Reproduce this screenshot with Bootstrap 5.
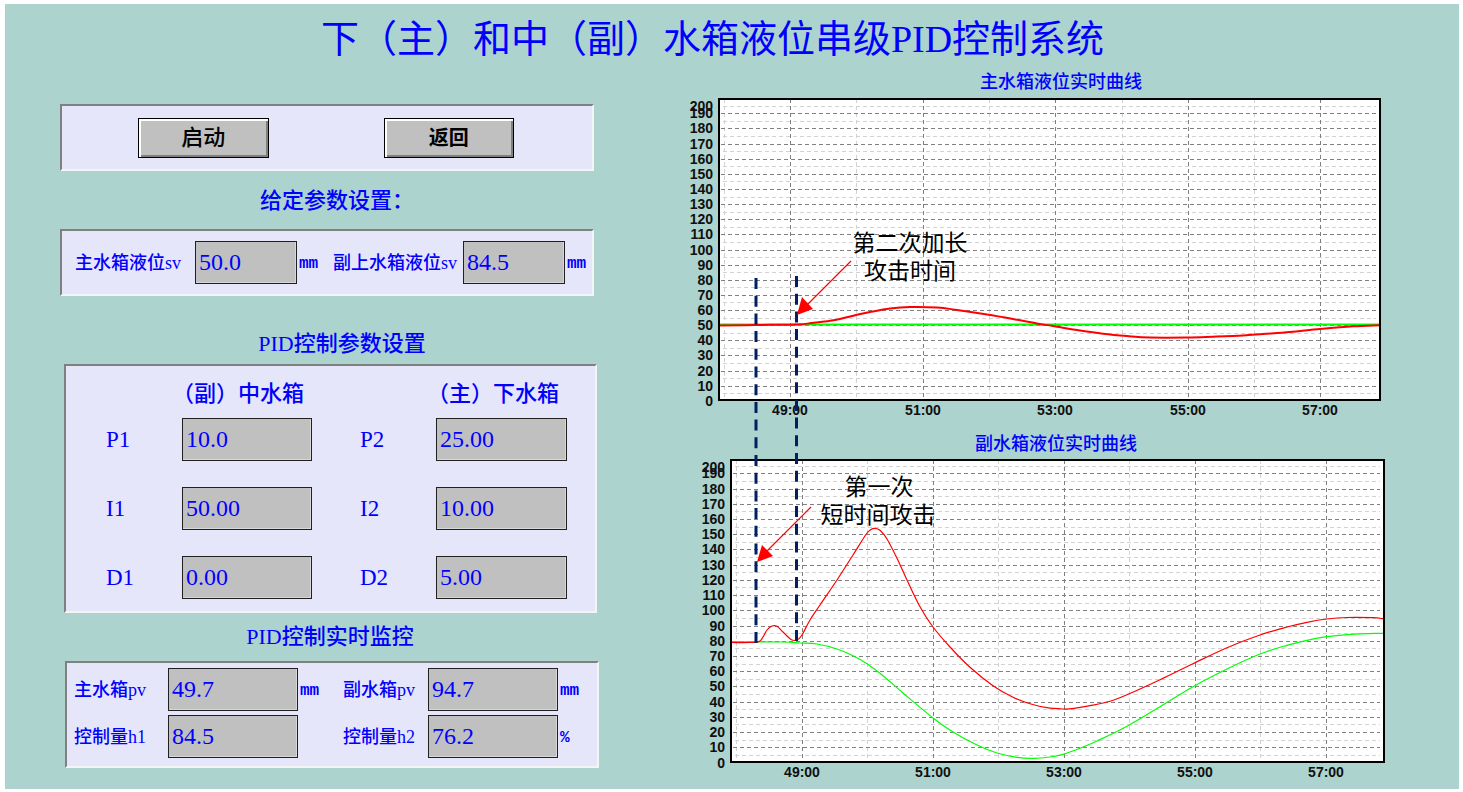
<!DOCTYPE html>
<html lang="zh-CN">
<head>
<meta charset="utf-8">
<meta name="viewport" content="width=device-width, initial-scale=1">
<title>下（主）和中（副）水箱液位串级PID控制系统</title>
<link href="https://cdn.jsdelivr.net/npm/bootstrap@5.3.0/dist/css/bootstrap.min.css" rel="stylesheet">
<style>
  :root { --ink: #0000ff; --board: #acd3ce; --pane: #e6e6fa; --face: #c0c0c0; }
  body { background: #fff; font-family: "Liberation Serif", "Noto Sans CJK SC", serif; color: var(--ink); padding: 4px 4px 3px 5px; }
  .board { background: var(--board); padding-bottom: 4px; }
  .board-title { font-size: 38px; line-height: 58px; padding-top: 6px; padding-right: 39px; font-weight: 400; }
  .work { display: grid; grid-template-columns: minmax(0, 540fr) minmax(0, 713fr); column-gap: 80px; padding-left: 55px; padding-right: 66px; }
  .controls { padding-top: 36px; }
  .pane { background: var(--pane); border: 2px solid; border-color: #808080 #f4f4f4 #f4f4f4 #808080; }
  .pane-upper { margin-right: 6px; height: 67px; }
  .pane-pid { margin: 0 3px 0 4px; padding: 0 0 12px; }
  .pane-live { margin: 0 1px 0 5px; padding: 5px 0 8px 7px; }
  .pane-title { font-size: 22px; line-height: 40px; margin: 0; text-align: center; font-weight: 500; }
  .title-set { padding: 10px 0 8px 14px; }
  .title-pid { padding: 28px 0 0 24px; }
  .title-live { padding: 4px 0; }
  .action-row { grid-template-columns: 130fr 130fr; column-gap: 115px; padding: 0 78px 0 76px; align-items: center; }
  .set-row { grid-template-columns: 120fr 102fr 36fr 130fr 102fr 27fr; padding-left: 13px; align-items: center; }
  .pid-grid { grid-template-columns: 116fr 130fr 124fr 131fr 28fr; row-gap: 26px; align-items: center; }
  .tank-row { grid-template-columns: 246fr 255fr 28fr; padding-top: 4px; }
  .live-grid { grid-template-columns: 94fr 130fr 45fr 85fr 130fr 39fr; row-gap: 4px; align-items: center; }
  .tank-name { font-size: 22px; font-weight: 500; line-height: 48px; text-align: right; padding-right: 8px; white-space: nowrap; }
  .item-name { font-size: 18px; font-weight: 500; line-height: 24px; white-space: nowrap; }
  .gain-name { font-size: 23px; line-height: 24px; padding-left: 40px; }
  .gain-name.second { padding-left: 48px; }
  .unit { font: 700 16px/24px "Liberation Mono", monospace; padding-left: 2px; padding-top: 2px; }
  .readout { width: 100%; height: 43px; border: 1px solid #202020; border-radius: 0; background: var(--face); color: var(--ink); font-family: "Liberation Serif", serif; font-size: 24px; line-height: 28px; padding: 0 3px 1px; box-shadow: inset -1px -1px 0 #d8d8d8; }
  .readout:focus { background: var(--face); color: var(--ink); box-shadow: 0 0 0 1px var(--ink); }
  .btn-relief { height: 40px; border: 1px solid #000; border-radius: 0; background: var(--face); color: #000; font-size: 22px; font-weight: 500; line-height: 28px; padding: 0; box-shadow: inset 2px 2px 0 #fff, inset -2px -2px 0 #808080; }
  .btn-relief:hover { background: #cacaca; color: #000; border-color: #000; }
  .btn-relief.compact { font-size: 20px; font-weight: 700; }
  .trends { display: block; width: 100%; height: auto; }
  .trend-title { font: 500 18px "Noto Sans CJK SC", sans-serif; fill: var(--ink); text-anchor: middle; }
  .tick { font: 700 14px "Liberation Sans", sans-serif; fill: #101010; }
  .note { font: 400 23px "Noto Sans CJK SC", sans-serif; fill: #000; text-anchor: middle; }
  @media (max-width: 991px) { .work { grid-template-columns: minmax(0, 1fr); padding-left: 16px; padding-right: 16px; } }
</style>
</head>
<body>
<main class="board">
  <h1 class="board-title text-center mb-0">下（主）和中（副）水箱液位串级PID控制系统</h1>
  <div class="work">
    <section class="controls">
      <div class="pane pane-upper d-grid action-row">
        <button type="button" class="btn btn-relief">启动</button>
        <button type="button" class="btn btn-relief compact">返回</button>
      </div>

      <h2 class="pane-title title-set">给定参数设置：</h2>
      <div class="pane pane-upper d-grid set-row">
        <label class="item-name" for="sv1">主水箱液位sv</label>
        <input class="form-control readout" id="sv1" value="50.0">
        <span class="unit">mm</span>
        <label class="item-name" for="sv2">副上水箱液位sv</label>
        <input class="form-control readout" id="sv2" value="84.5">
        <span class="unit">mm</span>
      </div>

      <h2 class="pane-title title-pid">PID控制参数设置</h2>
      <div class="pane pane-pid">
        <div class="d-grid tank-row">
          <div class="tank-name">（副）中水箱</div>
          <div class="tank-name">（主）下水箱</div>
        </div>
        <div class="d-grid pid-grid">
          <label class="gain-name" for="p1">P1</label>
          <input class="form-control readout" id="p1" value="10.0">
          <label class="gain-name second" for="p2">P2</label>
          <input class="form-control readout" id="p2" value="25.00">
          <span></span>
          <label class="gain-name" for="i1">I1</label>
          <input class="form-control readout" id="i1" value="50.00">
          <label class="gain-name second" for="i2">I2</label>
          <input class="form-control readout" id="i2" value="10.00">
          <span></span>
          <label class="gain-name" for="d1">D1</label>
          <input class="form-control readout" id="d1" value="0.00">
          <label class="gain-name second" for="d2">D2</label>
          <input class="form-control readout" id="d2" value="5.00">
          <span></span>
        </div>
      </div>

      <h2 class="pane-title title-live">PID控制实时监控</h2>
      <div class="pane pane-live d-grid live-grid">
        <label class="item-name" for="pv1">主水箱pv</label>
        <input class="form-control readout" id="pv1" value="49.7" readonly>
        <span class="unit">mm</span>
        <label class="item-name" for="pv2">副水箱pv</label>
        <input class="form-control readout" id="pv2" value="94.7" readonly>
        <span class="unit">mm</span>
        <label class="item-name" for="h1">控制量h1</label>
        <input class="form-control readout" id="h1" value="84.5" readonly>
        <span></span>
        <label class="item-name" for="h2">控制量h2</label>
        <input class="form-control readout" id="h2" value="76.2" readonly>
        <span class="unit">%</span>
      </div>
    </section>

    <section>
      <svg class="trends" viewBox="680 68 713 717" role="img" aria-label="水箱液位实时曲线">
        <text class="trend-title" x="1061" y="88">主水箱液位实时曲线</text>
        <g id="plot-main"></g>
        <text class="trend-title" x="1056" y="450">副水箱液位实时曲线</text>
        <g id="plot-sub"></g>
        <!-- attack markers shared by both plots -->
        <g stroke="#002060" stroke-width="3" stroke-dasharray="11 6.7">
          <line x1="756" y1="278" x2="756" y2="644"/>
          <line x1="796.5" y1="276" x2="796.5" y2="641"/>
        </g>
        <g fill="#ff0000">
          <path d="M851 261L805 307M811 507L765 553" fill="none" stroke="#ff0000" stroke-width="1.2"/>
          <polygon points="797,315 802,297 813,309"/>
          <polygon points="757,562 762,545 773,556"/>
        </g>
        <text class="note" x="910" y="251">第二次加长</text>
        <text class="note" x="910" y="279">攻击时间</text>
        <text class="note" x="879" y="495">第一次</text>
        <text class="note" x="878" y="523">短时间攻击</text>
      </svg>
    </section>
  </div>
</main>
<script src="https://cdn.jsdelivr.net/npm/bootstrap@5.3.0/dist/js/bootstrap.bundle.min.js"></script>
<script>
  const NS = 'http://www.w3.org/2000/svg';
  function add(parent, tag, attrs, text) {
    const el = document.createElementNS(NS, tag);
    for (const k in attrs) el.setAttribute(k, attrs[k]);
    if (text !== undefined) el.textContent = text;
    parent.appendChild(el);
  }
  // Smooth line through the samples (Catmull-Rom to Bezier)
  function smooth(p) {
    let d = 'M' + p[0];
    for (let i = 0; i < p.length - 1; i++) {
      const a = p[i - 1] || p[i], b = p[i], c = p[i + 1], e = p[i + 2] || c;
      d += 'C' + [b[0] + (c[0] - a[0]) / 6, b[1] + (c[1] - a[1]) / 6,
                  c[0] - (e[0] - b[0]) / 6, c[1] - (e[1] - b[1]) / 6, c[0], c[1]].join(' ');
    }
    return d;
  }
  function plot(id, o) {
    const g = document.getElementById(id);
    const w = o.right - o.left, h = o.bottom - o.top;
    add(g, 'rect', { x: o.left, y: o.top, width: w, height: h, fill: '#fff' });
    const y = v => Math.round(o.zero - v * o.step / 10) + 0.5;
    let minor = '', major = '';
    for (let v = 5; v < 200; v += 10) minor += `M${o.left + 4} ${y(v)}H${o.right - 4}`;
    for (let v = 10; v < 200; v += 10) major += `M${o.left + 2} ${y(v)}H${o.right - 4}`;
    for (let i = 0; i < 5; i++) {
      const x = o.first + i * o.pitch;
      major += `M${Math.round(x) + 0.5} ${o.top}V${o.bottom}`;
      minor += `M${Math.round(x - o.pitch / 2) + 0.5} ${o.top}V${o.bottom}`;
      add(g, 'text', { class: 'tick', x: Math.round(x), y: o.bottom + 15, 'text-anchor': 'middle' }, (49 + 2 * i) + ':00');
    }
    add(g, 'path', { d: minor, stroke: '#d2d2d2', 'stroke-dasharray': '4 3', fill: 'none' });
    add(g, 'path', { d: major, stroke: '#808080', 'stroke-dasharray': '4 3', fill: 'none' });
    for (let v = 0; v <= 200; v += 10) {
      const at = v === 200 ? o.top + 7 : o.zero - v * o.step / 10;
      add(g, 'text', { class: 'tick', x: o.left - 6, y: Math.round(at + 5), 'text-anchor': 'end' }, v);
    }
    add(g, 'path', { d: smooth(o.green), stroke: '#00ff00', 'stroke-width': o.weight, fill: 'none' });
    add(g, 'path', { d: smooth(o.red), stroke: '#ff0000', 'stroke-width': o.weight, fill: 'none' });
    add(g, 'rect', { x: o.left, y: o.top, width: w, height: h, fill: 'none', stroke: '#000', 'stroke-width': 2 });
  }
  plot('plot-main', {
    left: 719, right: 1380, top: 99, bottom: 400, zero: 400.8, step: 15.13, first: 790, pitch: 132.6, weight: 2,
    green: [[720, 324.5], [1379, 324.5]],
    red: [[720, 325.5], [755, 325], [797, 324.5], [812, 323], [835, 320], [856, 315], [870, 312], [890, 308.5], [910, 307],
      [937, 307.5], [957, 310], [987, 314.5], [1013, 319], [1037, 323.5], [1053, 326], [1080, 330.5], [1103, 333.7],
      [1127, 336], [1150, 337.5], [1187, 337.5], [1213, 336.7], [1243, 335.5], [1263, 334], [1290, 332], [1320, 329],
      [1353, 326.3], [1379, 325.3]]
  });
  plot('plot-sub', {
    left: 731, right: 1384, top: 460, bottom: 762, zero: 762.5, step: 15.22, first: 801.7, pitch: 131, weight: 1.2,
    green: [[732, 641.7], [783, 642], [800, 643], [817, 644], [837, 649], [853, 655.7], [867, 663.7], [883, 675.7], [903, 693],
      [933, 718], [953, 732], [977, 745], [997, 753], [1017, 757.3], [1033, 758.3], [1050, 757], [1063, 754.3], [1080, 748.3],
      [1097, 741], [1128, 725.7], [1160, 706.7], [1193, 686.7], [1227, 669], [1260, 654], [1287, 645.3], [1307, 640.3],
      [1327, 636.7], [1350, 634.3], [1383, 633.3]],
    red: [[732, 642.5], [750, 642.5], [760, 641], [767, 630], [772, 626], [777, 626.3], [783, 632], [791, 639.5], [797, 640],
      [802, 635], [810, 620], [820, 605], [837, 580], [853, 555], [866, 534.5], [871, 529.5], [875, 528.3], [880, 530.3],
      [887, 539], [897, 558.3], [907, 580], [920, 606.7], [933, 627], [950, 647], [970, 667.3], [993, 685.7], [1013, 697.3],
      [1030, 703.7], [1047, 707.7], [1063, 709], [1072, 708.7], [1090, 705.7], [1110, 701.3], [1128, 694.3], [1160, 679.7],
      [1193, 663.7], [1227, 647.7], [1260, 635], [1287, 627], [1307, 622.3], [1327, 619], [1347, 617.5], [1373, 617.7], [1383, 618.7]]
  });
</script>
</body>
</html>
